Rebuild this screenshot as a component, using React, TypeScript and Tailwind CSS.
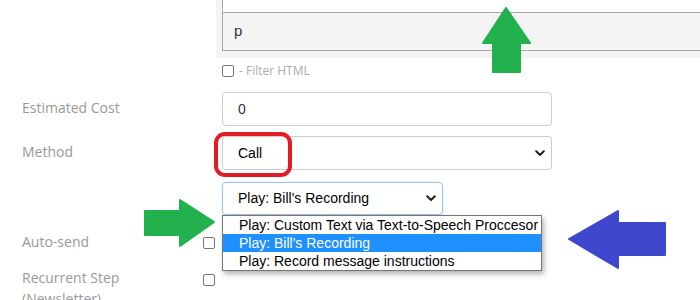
import React from "react";

const labelFont = { fontFamily: "'Open Sans', Lato, sans-serif" };

function Chevron() {
	return (
		<svg width="10" height="7" viewBox="0 0 10 7" className="shrink-0">
			<path d="M1.2 1.2 L5 5 L8.8 1.2" fill="none" stroke="#222" strokeWidth="2" strokeLinecap="round" strokeLinejoin="round" />
		</svg>
	);
}

function Box() {
	return <span className="block w-[12px] h-[12px] rounded-[2px] border border-[#777] bg-white shrink-0" />;
}

function Annotations() {
	return (
		<svg width="700" height="300" viewBox="0 0 700 300" className="absolute left-0 top-0 pointer-events-none">
			{/* up arrow */}
			<polygon
				points="506,8 530,43 520,43 520,72 493,72 493,43 483,43"
				fill="#22b14c"
				stroke="#22b14c"
				strokeWidth="2"
				strokeLinejoin="round"
			/>
			{/* right arrow */}
			<polygon
				points="145,211 180,211 180,200 214,222 180,246 180,235 145,235"
				fill="#22b14c"
				stroke="#22b14c"
				strokeWidth="2"
				strokeLinejoin="round"
			/>
			{/* left arrow */}
			<polygon
				points="569,239 618,211 618,223 665,223 665,255 618,255 618,268"
				fill="#3f48cc"
				stroke="#3f48cc"
				strokeWidth="2"
				strokeLinejoin="round"
			/>
			{/* highlight ring */}
			<rect x="216" y="134" width="74" height="41" rx="9" fill="none" stroke="#e31b23" strokeWidth="4" />
		</svg>
	);
}

export default function App() {
	return (
		<div className="relative w-[700px] h-[300px] overflow-hidden bg-white" style={{ fontFamily: "'Liberation Sans', Arial, sans-serif" }}>
			{/* editor tail */}
			<div className="flex h-[58px]">
				<div className="w-[216px] shrink-0" />
				<div className="flex-1 bg-[#f4f4f4] pl-[6px]">
					<div className="border-l border-b border-[#a8a8a8] h-[51px]">
						<div className="h-[13px] bg-white border-b border-[#a8a8a8]" />
						<div className="h-[37px] flex items-center pl-[11px] text-[15px] text-[#333]">p</div>
					</div>
				</div>
			</div>

			{/* filter html */}
			<div className="flex items-center h-[26px] pl-[222px] gap-[5px]" style={labelFont}>
				<Box />
				<span className="text-[12px] text-[#aaa]">- Filter HTML</span>
			</div>

			{/* estimated cost */}
			<div className="flex items-center mt-[8px]">
				<div className="w-[222px] pl-[22px] pb-[3px] text-[14px] text-[#999]" style={labelFont}>Estimated Cost</div>
				<div className="w-[330px] h-[34px] border border-[#ccc] rounded-[4px] flex items-center pl-[15px] text-[14px] text-[#333]">0</div>
			</div>

			{/* method */}
			<div className="flex items-center mt-[10px]">
				<div className="w-[222px] pl-[22px] pb-[3px] text-[14px] text-[#999]" style={labelFont}>Method</div>
				<div className="w-[330px] h-[34px] border border-[#ccc] rounded-[4px] flex items-center justify-between pl-[15px] pr-[6px] text-[14px] text-black">
					<span>Call</span>
					<Chevron />
				</div>
			</div>

			{/* play select */}
			<div className="flex mt-[12px]">
				<div className="w-[222px] shrink-0" />
				<div className="relative">
					<div className="w-[221px] h-[33px] border border-[#9ec3ea] rounded-[4px] shadow-[0_0_2px_rgba(80,150,230,0.35)] flex items-center justify-between pl-[15px] pr-[6px] text-[14px] text-black">
						<span>Play: Bill&apos;s Recording</span>
						<Chevron />
					</div>
					<div className="absolute left-0 top-[33px] w-[320px] border border-[#767676] bg-white text-[14px] leading-[18px] shadow-[2px_3px_5px_rgba(0,0,0,0.3)] z-10">
						<div className="pl-[16px] text-black whitespace-nowrap">Play: Custom Text via Text-to-Speech Proccesor</div>
						<div className="pl-[16px] bg-[#1e90ff] text-white whitespace-nowrap">Play: Bill&apos;s Recording</div>
						<div className="pl-[16px] text-black whitespace-nowrap">Play: Record message instructions</div>
					</div>
				</div>
			</div>

			{/* auto-send */}
			<div className="flex items-center h-[24px] mt-[16px]">
				<div className="w-[203px] pl-[22px] pb-[4px] text-[14px] text-[#999]" style={labelFont}>Auto-send</div>
				<Box />
			</div>

			{/* recurrent */}
			<div className="flex items-start mt-[13px]">
				<div className="w-[203px] pl-[22px] -mt-[1px] text-[14px] leading-[21px] text-[#999]" style={labelFont}>
					Recurrent Step
					<br />
					(Newsletter)
				</div>
				<div className="mt-[6px]">
					<Box />
				</div>
			</div>

			<Annotations />
		</div>
	);
}
